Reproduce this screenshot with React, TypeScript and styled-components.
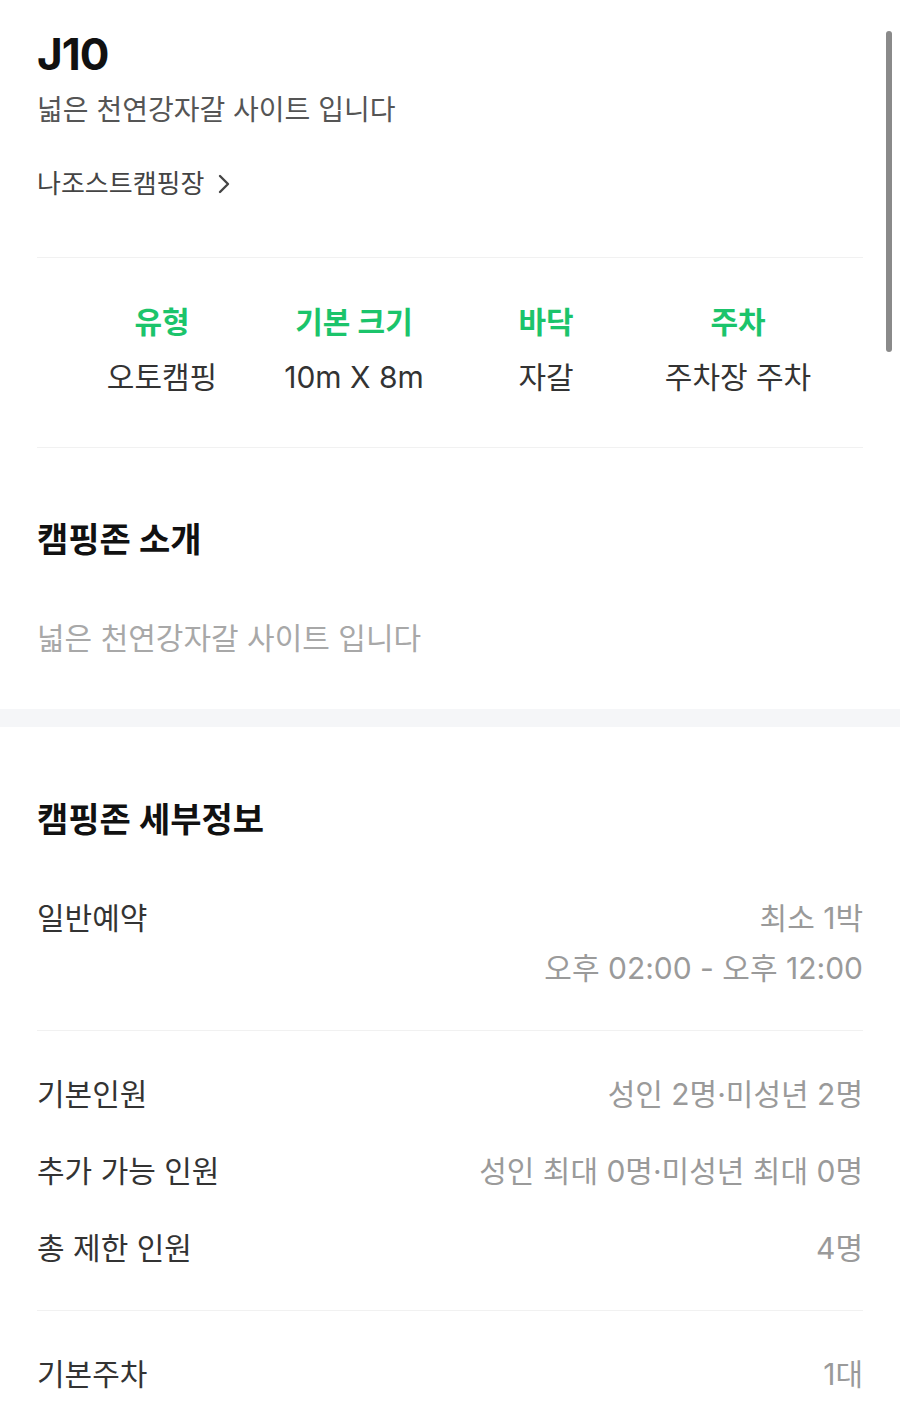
import styled, { createGlobalStyle } from "styled-components";

const GlobalStyle = createGlobalStyle`
  html, body {
    margin: 0;
    padding: 0;
    background: #ffffff;
  }
  body {
    font-family: Inter, "Noto Sans CJK KR", "Noto Sans", sans-serif;
    -webkit-font-smoothing: antialiased;
  }
  * { box-sizing: border-box; }
`;

const Page = styled.div`
  position: relative;
  width: 900px;
  min-height: 1417px;
  background: #ffffff;
  overflow: hidden;
`;

const Scrollbar = styled.div`
  position: absolute;
  top: 31px;
  right: 8px;
  width: 6px;
  height: 321px;
  border-radius: 3px;
  background: #8a8a8a;
`;

const Section = styled.section`
  padding: 0 37px;
`;

const Header = styled.div`
  display: flex;
  flex-direction: column;
  padding: 28px 0 56px;
  border-bottom: 1px solid #f1f1f1;
`;

const Title = styled.h1`
  margin: 0;
  font-size: 44px;
  line-height: 53px;
  font-weight: 700;
  color: #111111;
  letter-spacing: -1px;
`;

const Subtitle = styled.p`
  margin: 9px 0 0;
  font-size: 28px;
  line-height: 40px;
  color: #555555;
`;

const CampLink = styled.a`
  display: flex;
  align-items: center;
  gap: 13px;
  margin-top: 37px;
  font-size: 26px;
  line-height: 34px;
  color: #444444;
  text-decoration: none;
`;

const SpecGrid = styled.div`
  display: grid;
  grid-template-columns: repeat(4, 192px);
  justify-content: center;
  padding: 44px 0 50px;
  border-bottom: 1px solid #f1f1f1;
`;

const Spec = styled.div`
  display: flex;
  flex-direction: column;
  align-items: center;
  gap: 15px;
`;

const SpecLabel = styled.span`
  font-size: 30px;
  line-height: 40px;
  font-weight: 700;
  color: #1bc46b;
`;

const SpecValue = styled.span`
  font-size: 30px;
  line-height: 40px;
  color: #333333;
`;

const Heading = styled.h2<{ $top: number }>`
  margin: ${(p) => p.$top}px 0 0;
  font-size: 34px;
  line-height: 44px;
  font-weight: 700;
  color: #111111;
`;

const Description = styled.p`
  margin: 56px 0 0;
  padding-bottom: 51px;
  font-size: 30px;
  line-height: 40px;
  color: #a8a8a8;
`;

const Band = styled.div`
  height: 18px;
  background: #f5f6f8;
`;

const Group = styled.div<{ $top: number; $divider?: boolean }>`
  display: flex;
  flex-direction: column;
  gap: 37px;
  padding: ${(p) => p.$top}px 0 42px;
  border-bottom: ${(p) => (p.$divider ? "1px solid #f1f1f1" : "none")};
`;

const Row = styled.div`
  display: flex;
  justify-content: space-between;
  align-items: flex-start;
`;

const RowLabel = styled.span`
  font-size: 30px;
  line-height: 40px;
  color: #333333;
`;

const RowValues = styled.div`
  display: flex;
  flex-direction: column;
  align-items: flex-end;
  gap: 10px;
`;

const RowValue = styled.span`
  font-size: 30px;
  line-height: 40px;
  color: #9a9a9a;
  text-align: right;
`;

const Chevron = () => (
  <svg width="14" height="20" viewBox="0 0 14 20" fill="none">
    <path d="M3 2 L11 10 L3 18" stroke="#444444" strokeWidth="2.4" strokeLinecap="round" strokeLinejoin="round" />
  </svg>
);

const specs = [
  { label: "유형", value: "오토캠핑" },
  { label: "기본 크기", value: "10m X 8m" },
  { label: "바닥", value: "자갈" },
  { label: "주차", value: "주차장 주차" },
];

const people = [
  { label: "기본인원", value: "성인 2명·미성년 2명" },
  { label: "추가 가능 인원", value: "성인 최대 0명·미성년 최대 0명" },
  { label: "총 제한 인원", value: "4명" },
];

export default function App() {
  return (
    <Page>
      <GlobalStyle />
      <Section>
        <Header>
          <Title>J10</Title>
          <Subtitle>넓은 천연강자갈 사이트 입니다</Subtitle>
          <CampLink href="#">
            나조스트캠핑장
            <Chevron />
          </CampLink>
        </Header>
        <SpecGrid>
          {specs.map((s) => (
            <Spec key={s.label}>
              <SpecLabel>{s.label}</SpecLabel>
              <SpecValue>{s.value}</SpecValue>
            </Spec>
          ))}
        </SpecGrid>
        <Heading $top={70}>캠핑존 소개</Heading>
        <Description>넓은 천연강자갈 사이트 입니다</Description>
      </Section>
      <Band />
      <Section>
        <Heading $top={71}>캠핑존 세부정보</Heading>
        <Group $top={56} $divider>
          <Row>
            <RowLabel>일반예약</RowLabel>
            <RowValues>
              <RowValue>최소 1박</RowValue>
              <RowValue>오후 02:00 - 오후 12:00</RowValue>
            </RowValues>
          </Row>
        </Group>
        <Group $top={43} $divider>
          {people.map((p) => (
            <Row key={p.label}>
              <RowLabel>{p.label}</RowLabel>
              <RowValue>{p.value}</RowValue>
            </Row>
          ))}
        </Group>
        <Group $top={43}>
          <Row>
            <RowLabel>기본주차</RowLabel>
            <RowValue>1대</RowValue>
          </Row>
        </Group>
      </Section>
      <Scrollbar />
    </Page>
  );
}
